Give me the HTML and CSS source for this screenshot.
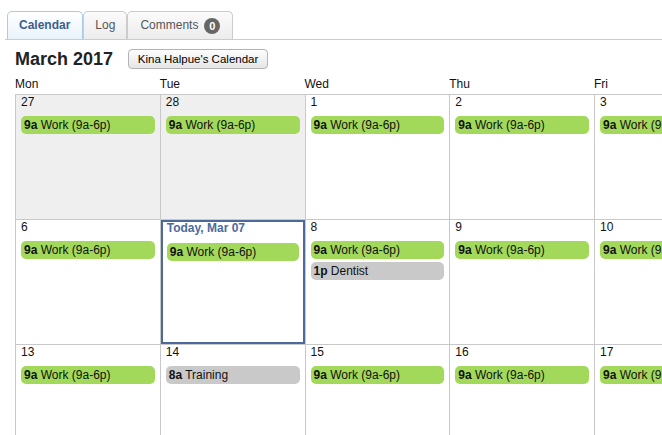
FILE: index.html
```html
<!DOCTYPE html>
<html>
<head>
<meta charset="utf-8">
<link rel="stylesheet" href="styles.css">
</head>
<body>
<div class="tabs">
  <div class="tab active">Calendar</div>
  <div class="tab">Log</div>
  <div class="tab comments">Comments <span class="badge">0</span></div>
</div>
<div class="title-row">
  <h1 class="title">March 2017</h1>
  <button class="cal-btn">Kina Halpue's Calendar</button>
</div>
<div class="weekdays">
  <div>Mon</div><div>Tue</div><div>Wed</div><div>Thu</div><div>Fri</div><div>Sat</div><div>Sun</div>
</div>
<div class="month">
  <div class="cell other"><div class="date">27</div><div class="event work"><b>9a</b> Work (9a-6p)</div></div>
  <div class="cell other"><div class="date">28</div><div class="event work"><b>9a</b> Work (9a-6p)</div></div>
  <div class="cell"><div class="date">1</div><div class="event work"><b>9a</b> Work (9a-6p)</div></div>
  <div class="cell"><div class="date">2</div><div class="event work"><b>9a</b> Work (9a-6p)</div></div>
  <div class="cell"><div class="date">3</div><div class="event work"><b>9a</b> Work (9a-6p)</div></div>
  <div class="cell"><div class="date">4</div></div>
  <div class="cell"><div class="date">5</div></div>

  <div class="cell"><div class="date">6</div><div class="event work"><b>9a</b> Work (9a-6p)</div></div>
  <div class="cell today"><div class="date">Today, Mar 07</div><div class="event work"><b>9a</b> Work (9a-6p)</div></div>
  <div class="cell"><div class="date">8</div><div class="event work"><b>9a</b> Work (9a-6p)</div><div class="event other-ev"><b>1p</b> Dentist</div></div>
  <div class="cell"><div class="date">9</div><div class="event work"><b>9a</b> Work (9a-6p)</div></div>
  <div class="cell"><div class="date">10</div><div class="event work"><b>9a</b> Work (9a-6p)</div></div>
  <div class="cell"><div class="date">11</div></div>
  <div class="cell"><div class="date">12</div></div>

  <div class="cell"><div class="date">13</div><div class="event work"><b>9a</b> Work (9a-6p)</div></div>
  <div class="cell"><div class="date">14</div><div class="event other-ev"><b>8a</b> Training</div></div>
  <div class="cell"><div class="date">15</div><div class="event work"><b>9a</b> Work (9a-6p)</div></div>
  <div class="cell"><div class="date">16</div><div class="event work"><b>9a</b> Work (9a-6p)</div></div>
  <div class="cell"><div class="date">17</div><div class="event work"><b>9a</b> Work (9a-6p)</div></div>
  <div class="cell"><div class="date">18</div></div>
  <div class="cell"><div class="date">19</div></div>
</div>
</body>
</html>
```

FILE: styles.css
```css
html, body {
  overflow: hidden;
}
body {
  margin: 0;
  padding-top: 11px;
  font-family: "Liberation Sans", Arial, sans-serif;
  font-size: 12px;
  color: #111;
  background: #fff;
}
.tabs {
  display: flex;
  margin-left: 5px;
  padding-left: 2px;
  border-bottom: 1px solid #cccccc;
}
.tab {
  height: 27px;
  line-height: 27px;
  padding: 0 11px;
  border: 1px solid #cccccc;
  border-bottom: none;
  border-radius: 5px 5px 0 0;
  background: linear-gradient(#fbfbfb, #ececec);
  color: #555;
  font-size: 12px;
  display: flex;
  align-items: center;
}
.tab.active {
  border-color: #a9cbe8;
  background: linear-gradient(#ffffff, #e9f3fb);
  color: #3e5d8f;
  font-weight: bold;
  padding: 0 12px 0 11px;
}
.tab.comments {
  padding: 0 12px 0 12px;
}
.badge {
  display: inline-block;
  width: 16px;
  height: 16px;
  line-height: 16px;
  border-radius: 50%;
  background: #666;
  color: #fff;
  font-weight: bold;
  font-size: 11px;
  text-align: center;
  margin-left: 6px;
}
.title-row {
  display: flex;
  align-items: center;
  margin-top: 9px;
  padding-left: 15px;
  height: 20px;
}
.title {
  margin: 0;
  font-size: 18px;
  line-height: 20px;
  font-weight: bold;
  color: #222;
}
.cal-btn {
  margin-left: 15px;
  height: 20px;
  width: 140px;
  padding: 0;
  border: 1px solid #b3b3b3;
  border-radius: 4px;
  background: linear-gradient(#fdfdfd, #e6e6e6);
  font-family: "Liberation Sans", Arial, sans-serif;
  font-size: 11.5px;
  color: #000;
}
.weekdays {
  display: grid;
  grid-template-columns: repeat(7, 144.75px);
  margin-left: 15px;
  margin-top: 8px;
  line-height: 15px;
  padding-bottom: 2px;
  color: #111;
}
.month {
  display: grid;
  grid-template-columns: repeat(7, 144.75px);
  grid-auto-rows: 125px;
  margin-left: 15px;
  width: max-content;
}
.cell {
  border-left: 1px solid #c8c8c8;
  border-top: 1px solid #c8c8c8;
  padding: 0 5px;
  min-width: 0;
}
.cell.other {
  background: #efefef;
}
.cell.today {
  box-shadow: inset 0 0 0 2px #4b6a9b;
  padding: 1px 6px 0 6px;
}
.date {
  line-height: 14px;
  margin-bottom: 7px;
  color: #111;
}
.today .date {
  color: #4a6b9d;
  font-weight: bold;
  margin-bottom: 8px;
}
.event {
  height: 18px;
  line-height: 19px;
  border-radius: 5px;
  padding-left: 3px;
  white-space: nowrap;
  overflow: hidden;
  color: #111;
}
.event + .event {
  margin-top: 3px;
}
.event.work {
  background: #a3d95b;
}
.event.other-ev {
  background: #c9c9c9;
}
```
